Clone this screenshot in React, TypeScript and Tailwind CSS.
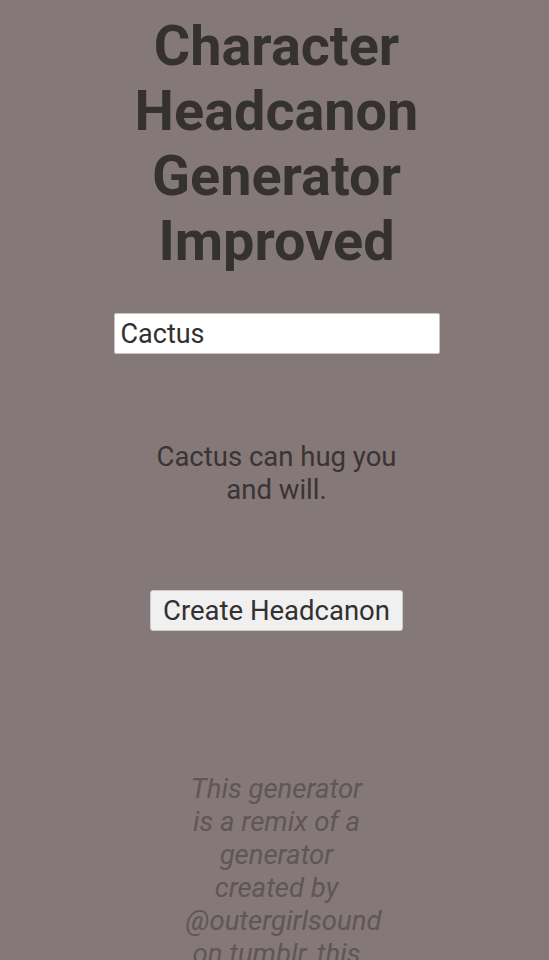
import React, { useState } from 'react';

const headcanons = [
  'can hug you and will.',
  'secretly loves rainy days.',
  'hums when they are nervous.',
];

export default function App() {
  const [name, setName] = useState('Cactus');
  const [result, setResult] = useState(`Cactus ${headcanons[0]}`);

  const create = () => {
    const pick = headcanons[Math.floor(Math.random() * headcanons.length)];
    setResult(`${name} ${pick}`);
  };

  return (
    <div
      className="min-h-screen bg-[#857878] flex flex-col items-center overflow-hidden text-center pl-[4px]"
      style={{ fontFamily: 'Roboto, "Noto Sans", sans-serif' }}
    >
      {/* 标题 */}
      <h1 className="mt-[14px] w-[320px] text-[55.8px] leading-[65px] font-bold text-[#353131]">
        Character Headcanon Generator Improved
      </h1>

      {/* 名字输入 */}
      <input
        value={name}
        onChange={(e) => setName(e.target.value)}
        className="mt-[39px] w-[326px] h-[41px] bg-white border border-[#c9c4c4] rounded-[2px] px-[6px] text-[27px] text-[#333030] outline-none"
      />

      {/* 结果 */}
      <p className="mt-[86px] w-[270px] text-[27.5px] leading-[33px] text-[#3a3434]">{result}</p>

      <button
        onClick={create}
        className="mt-[84px] h-[41px] px-[12px] bg-[#f1f0f0] border border-[#cfcaca] rounded-[3px] text-[27.5px] leading-none text-[#333030]"
      >
        Create Headcanon
      </button>

      {/* 说明 */}
      <p className="mt-[141px] w-[182px] text-[27.5px] leading-[33px] italic text-[#5f5656]">
        This generator is a remix of a generator created by @outergirlsound on tumblr, this version adds more headcanons and fixes a few typos.
      </p>
    </div>
  );
}
